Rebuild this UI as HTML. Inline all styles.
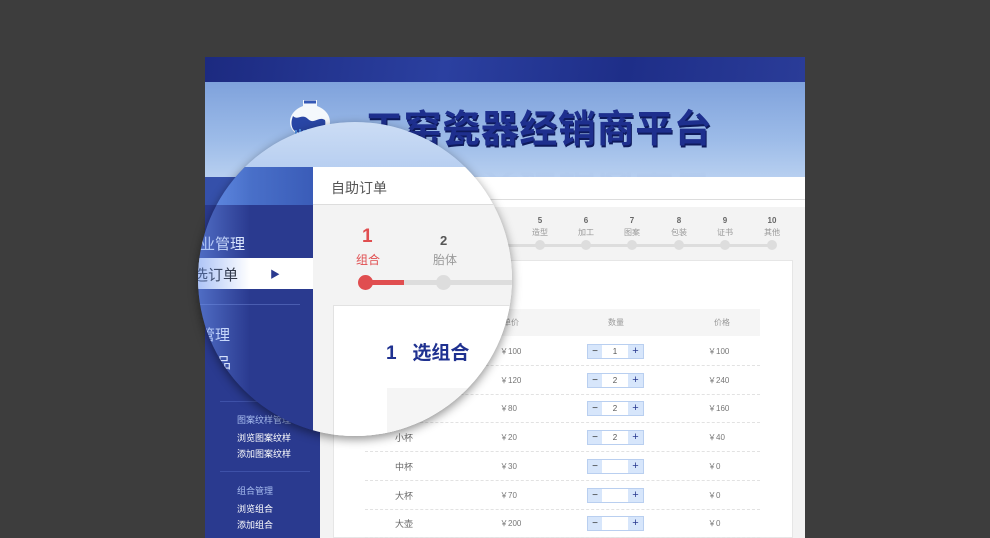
<!DOCTYPE html>
<html><head><meta charset="utf-8">
<style>
*{margin:0;padding:0;box-sizing:border-box}
html,body{width:990px;height:538px;overflow:hidden}
body{background:#3d3d3d;position:relative;font-family:"Liberation Sans","Noto Sans CJK SC",sans-serif}
.a{position:absolute}
.t{position:absolute;white-space:nowrap}
.q{position:absolute;width:57px;height:15px;background:#d7e6fb;border:1px solid #b9cff0;display:flex}
.q span{display:block;text-align:center;line-height:13px}
</style></head><body>
<div class="a" style="left:205px;top:57px;width:600px;height:481px;background:#f3f3f3;overflow:hidden">
<div class="a" style="left:0;top:0;width:600px;height:25px;background:linear-gradient(100deg,#1c2a80 0%,#2b40a0 40%,#1e2e88 70%,#2a3c98 100%)"></div>
<div class="a" style="left:0;top:25px;width:600px;height:95px;background:linear-gradient(180deg,#7fa2dc 0%,#9cbbe8 60%,#b7cff0 100%)"></div>
<div class="t" style="left:160px;top:51px;font-size:38px;line-height:44px;font-weight:bold;color:#1e2f8e;letter-spacing:0.6px;text-shadow:1px 2px 0 #0e1a5c">工窑瓷器经销商平台</div>
<div class="t" style="left:160px;top:97px;font-size:38px;line-height:44px;font-weight:bold;color:#1e2f8e;letter-spacing:0.6px;transform:scaleY(-1);opacity:.12;-webkit-mask-image:linear-gradient(0deg,transparent 40%,#000 100%)">工窑瓷器经销商平台</div>
<div class="a" style="left:0;top:120px;width:600px;height:30px;background:#fff"></div>
<div class="a" style="left:115px;top:120px;width:485px;height:23px;background:#fff;border-bottom:1px solid #ddd"></div>
</div>
<svg class="a" style="left:288px;top:96px" width="50" height="48" viewBox="0 0 50 48"><ellipse cx="22" cy="43" rx="20" ry="4" fill="#bfe0f8"/><path d="M15 4h14v6c8 3 13 9 13 16c0 9-8 15-20 15S2 35 2 26c0-7 5-13 13-16z" fill="#f4f8fc"/><path d="M5 20c5 5 9-3 15 3s10-3 17 1c1 4 0 8-3 11c-6 5-24 5-29-2c-2-4-2-8 0-13z" fill="#2946a5"/><path d="M16 6h12" stroke="#3458b5" stroke-width="3"/><path d="M8 34v8M12 33v9M16 34v8M20 33v9M24 34v8" stroke="#4f8fe0" stroke-width="2"/></svg>
<!-- sidebar -->
<div class="a" style="left:205px;top:177px;width:115px;height:361px;background:#2a3a8f"></div>
<div class="a" style="left:205px;top:177px;width:115px;height:28px;background:#3550aa"></div>
<div class="a" style="left:220px;top:401px;width:90px;height:1px;background:#3e51a8"></div>
<div class="t" style="left:237px;top:413px;font-size:9px;color:#a8bdf0">图案纹样管理</div>
<div class="t" style="left:237px;top:431px;font-size:9px;color:#fff">浏览图案纹样</div>
<div class="t" style="left:237px;top:447px;font-size:9px;color:#fff">添加图案纹样</div>
<div class="a" style="left:220px;top:471px;width:90px;height:1px;background:#3e51a8"></div>
<div class="t" style="left:237px;top:484px;font-size:9px;color:#a8bdf0">组合管理</div>
<div class="t" style="left:237px;top:502px;font-size:9px;color:#fff">浏览组合</div>
<div class="t" style="left:237px;top:518px;font-size:9px;color:#fff">添加组合</div>
<!-- steps -->
<div class="a" style="left:500px;top:244px;width:274px;height:3px;background:#ddd"></div>
<div id="steps"></div>
<!-- card -->
<div class="a" style="left:333px;top:260px;width:460px;height:278px;background:#fff;border:1px solid #e6e6e6"></div>
<div class="a" style="left:365px;top:309px;width:395px;height:27px;background:#f5f5f5"></div>
<div class="t" style="left:503px;top:317px;font-size:8px;color:#999">单价</div>
<div class="t" style="left:608px;top:317px;font-size:8px;color:#999">数量</div>
<div class="t" style="left:714px;top:317px;font-size:8px;color:#999">价格</div>
<div id="rows"></div>
<!-- magnifier -->
<div class="a" style="left:198px;top:122px;width:314px;height:314px;border-radius:50%;overflow:hidden;box-shadow:0 3px 10px rgba(0,0,0,.45)">
 <div class="a" style="left:-198px;top:-122px;width:792px;height:538px;overflow:hidden">
  <div class="a" style="left:0;top:0;width:792px;height:167px;background:linear-gradient(180deg,#f2f6fc 0%,#d5e3f6 60%,#b8cff1 100%)"></div>
  <div class="a" style="left:180px;top:167px;width:133px;height:371px;background:#2a3a8f"></div>
  <div class="a" style="left:180px;top:167px;width:133px;height:38px;background:linear-gradient(90deg,#5a86dc,#3a5cb8)"></div>
  <div class="t" style="left:200px;top:233px;font-size:15px;color:#e8f0ff">业管理</div>
  <div class="a" style="left:180px;top:258px;width:133px;height:31px;background:#fff"></div>
  <div class="t" style="left:193px;top:264px;font-size:15px;color:#222">选订单</div>
  <div class="t" style="left:270px;top:266px;font-size:10px;color:#2a3a8f">▶</div>
  <div class="a" style="left:195px;top:304px;width:105px;height:1px;background:#4a5db0"></div>
  <div class="t" style="left:200px;top:324px;font-size:15px;color:#e8f0ff">管理</div>
  <div class="t" style="left:216px;top:352px;font-size:15px;color:#fff">品</div>
  <div class="a" style="left:180px;top:167px;width:70px;height:300px;background:linear-gradient(90deg,rgba(110,150,240,.75),rgba(42,58,143,0))"></div>
  <div class="a" style="left:313px;top:167px;width:300px;height:300px;background:#f3f3f3"></div>
  <div class="a" style="left:313px;top:167px;width:300px;height:38px;background:#fff;border-bottom:1px solid #ddd"></div>
  <div class="t" style="left:331px;top:178px;font-size:14px;color:#555">自助订单</div>
  <div class="t" style="left:362px;top:226px;font-size:19px;font-weight:bold;color:#e04e50">1</div>
  <div class="t" style="left:356px;top:251px;font-size:12px;color:#e04e50">组合</div>
  <div class="t" style="left:440px;top:233px;font-size:13px;font-weight:bold;color:#555">2</div>
  <div class="t" style="left:433px;top:251px;font-size:12px;color:#999">胎体</div>
  <div class="a" style="left:366px;top:280px;width:180px;height:5px;background:#ddd"></div>
  <div class="a" style="left:366px;top:280px;width:38px;height:5px;background:#e04e50"></div>
  <div class="a" style="left:358px;top:275px;width:15px;height:15px;border-radius:50%;background:#e04e50"></div>
  <div class="a" style="left:436px;top:275px;width:15px;height:15px;border-radius:50%;background:#ddd"></div>
  <div class="a" style="left:333px;top:305px;width:300px;height:200px;background:#fff;border:1px solid #e2e2e2"></div>
  <div class="t" style="left:386px;top:338px;font-size:19px;font-weight:bold;color:#1f3190">1&nbsp;&nbsp;&nbsp;选组合</div>
  <div class="a" style="left:387px;top:388px;width:140px;height:60px;background:#f5f5f5"></div>
  <div class="t" style="left:500px;top:346px;font-size:8px;color:#888">￥100</div>
 </div>
</div>
<script>
var s=[["5","造型",540],["6","加工",586],["7","图案",632],["8","包装",679],["9","证书",725],["10","其他",772]],h="";
s.forEach(function(a){h+='<div class="t" style="left:'+(a[2]-15)+'px;width:30px;text-align:center;top:216px;font-size:8px;font-weight:bold;color:#666">'+a[0]+'</div><div class="t" style="left:'+(a[2]-15)+'px;width:30px;text-align:center;top:227px;font-size:8px;color:#999">'+a[1]+'</div><div class="a" style="left:'+(a[2]-5)+'px;top:240px;width:10px;height:10px;border-radius:50%;background:#ddd"></div>'});
document.getElementById('steps').innerHTML=h;
var r=[["","￥100","1","￥100"],["","￥120","2","￥240"],["","￥80","2","￥160"],["小杯","￥20","2","￥40"],["中杯","￥30","","￥0"],["大杯","￥70","","￥0"],["大壶","￥200","","￥0"]],g="";
r.forEach(function(a,i){var y=Math.round(351+i*28.7);
g+='<div class="t" style="left:395px;top:'+(y-6)+'px;font-size:9px;color:#666">'+a[0]+'</div><div class="t" style="left:500px;top:'+(y-5)+'px;font-size:8px;color:#777">'+a[1]+'</div><div class="t" style="left:708px;top:'+(y-5)+'px;font-size:8px;color:#777">'+a[3]+'</div>'+
'<div class="q" style="left:587px;top:'+(y-7)+'px"><span style="width:14px;font-size:10px;color:#333">−</span><span style="width:26px;background:#fff;font-size:8px;color:#555">'+a[2]+'</span><span style="width:15px;font-size:11px;color:#2a3a8f">+</span></div>'+
'<div class="a" style="left:365px;top:'+(y+14)+'px;width:395px;border-top:1px dashed #e2e2e2"></div>'});
if(document.getElementById('rows'))document.getElementById('rows').innerHTML=g;
</script>
</body></html>
